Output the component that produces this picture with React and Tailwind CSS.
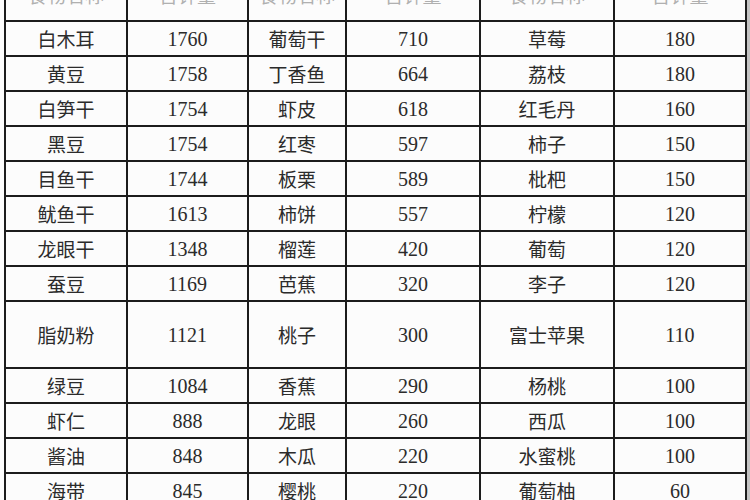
import React from 'react';

// 食物含钾量对照表 (mg/100g)，截图顶部表头被裁掉一部分
const HEADER = ['食物名称', '含钾量', '食物名称', '含钾量', '食物名称', '含钾量'];

const ROWS = [
  ['白木耳', '1760', '葡萄干', '710', '草莓', '180'],
  ['黄豆', '1758', '丁香鱼', '664', '荔枝', '180'],
  ['白笋干', '1754', '虾皮', '618', '红毛丹', '160'],
  ['黑豆', '1754', '红枣', '597', '柿子', '150'],
  ['目鱼干', '1744', '板栗', '589', '枇杷', '150'],
  ['鱿鱼干', '1613', '柿饼', '557', '柠檬', '120'],
  ['龙眼干', '1348', '榴莲', '420', '葡萄', '120'],
  ['蚕豆', '1169', '芭蕉', '320', '李子', '120'],
  ['脂奶粉', '1121', '桃子', '300', '富士苹果', '110', true],
  ['绿豆', '1084', '香蕉', '290', '杨桃', '100'],
  ['虾仁', '888', '龙眼', '260', '西瓜', '100'],
  ['酱油', '848', '木瓜', '220', '水蜜桃', '100'],
  ['海带', '845', '樱桃', '220', '葡萄柚', '60'],
];

const CJK = "font-['Noto_Sans_CJK_SC','Liberation_Serif',serif] text-[19px]";
const NUM = "font-['Liberation_Serif','Noto_Sans_CJK_SC',serif] text-[20px]";

function Cell({ children, numeric, tall }) {
  return (
    <div
      className={
        'bg-[#fcfcfc] flex items-center justify-center text-[#2b2b2b] leading-none ' +
        (tall ? 'h-[65px] ' : 'h-[33px] ') +
        (numeric ? NUM : CJK)
      }
    >
      {children}
    </div>
  );
}

export default function App() {
  return (
    <div className="w-[750px] h-[500px] overflow-hidden bg-[#fcfcfc] flex">
      <div className="ml-[4px] mt-[-15px] w-[743px] self-start bg-[#1c1c1c] p-[2px] grid grid-cols-[120px_119px_96px_132px_132px_130px] gap-[2px]">
        {HEADER.map((h, i) => (
          <Cell key={'h' + i} numeric={false}>
            <span className="text-[#b0b0b0] -translate-y-[9px]">{h}</span>
          </Cell>
        ))}
        {ROWS.map((r, ri) =>
          r.slice(0, 6).map((v, ci) => (
            <Cell key={ri + '-' + ci} numeric={ci % 2 === 1} tall={r[6]}>
              {v}
            </Cell>
          ))
        )}
      </div>
      <div className="flex-1 bg-[#c4c4c4]" />
    </div>
  );
}
